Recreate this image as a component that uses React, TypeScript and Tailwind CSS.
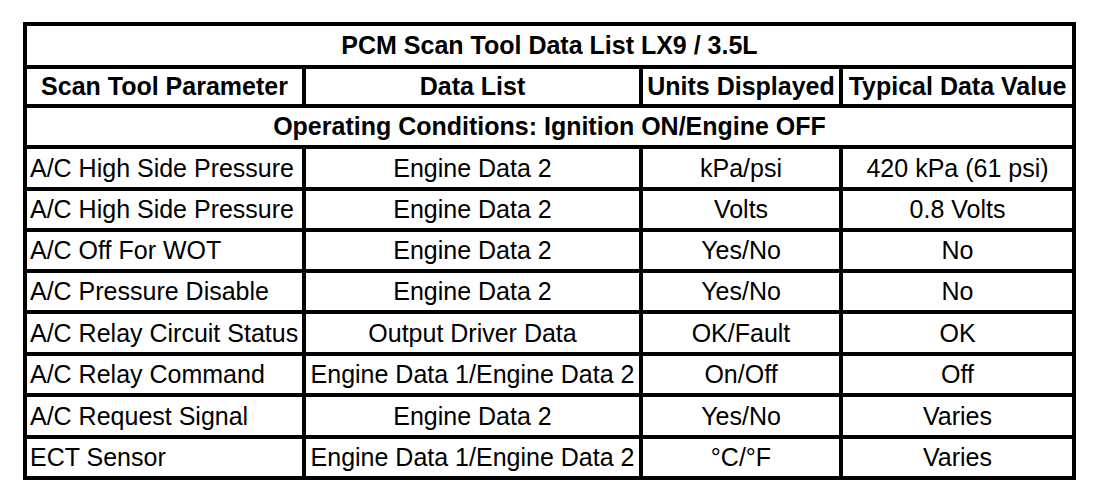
import React from "react";

const rows: [string, string, string, string][] = [
  ["A/C High Side Pressure", "Engine Data 2", "kPa/psi", "420 kPa (61 psi)"],
  ["A/C High Side Pressure", "Engine Data 2", "Volts", "0.8 Volts"],
  ["A/C Off For WOT", "Engine Data 2", "Yes/No", "No"],
  ["A/C Pressure Disable", "Engine Data 2", "Yes/No", "No"],
  ["A/C Relay Circuit Status", "Output Driver Data", "OK/Fault", "OK"],
  ["A/C Relay Command", "Engine Data 1/Engine Data 2", "On/Off", "Off"],
  ["A/C Request Signal", "Engine Data 2", "Yes/No", "Varies"],
  ["ECT Sensor", "Engine Data 1/Engine Data 2", "°C/°F", "Varies"],
];

export default function App() {
  return (
    <div
      className="w-[1120px] h-[498px] bg-white pt-[22px] pl-[23px] text-black"
      style={{ fontFamily: '"Liberation Sans", Arial, sans-serif' }}
    >
      <div className="grid w-[1053px] grid-cols-[275px_333px_196px_229px] grid-rows-[39px_35px_37px_38px_37px_37px_37px_38px_37px_38px_37px] gap-[4px] bg-black p-[4px] text-[25px] leading-none">
        <div className="col-span-4 flex items-center justify-center bg-white font-bold">
          PCM Scan Tool Data List LX9 / 3.5L
        </div>
        <div className="flex items-center justify-center bg-white font-bold">Scan Tool Parameter</div>
        <div className="flex items-center justify-center bg-white font-bold">Data List</div>
        <div className="flex items-center justify-center bg-white font-bold whitespace-nowrap">Units Displayed</div>
        <div className="flex items-center justify-center bg-white font-bold whitespace-nowrap">Typical Data Value</div>
        <div className="col-span-4 flex items-center justify-center bg-white font-bold">
          Operating Conditions: Ignition ON/Engine OFF
        </div>
        {rows.map((r, i) => (
          <React.Fragment key={i}>
            <div className="flex items-center bg-white pl-[3px] whitespace-nowrap">{r[0]}</div>
            <div className="flex items-center justify-center bg-white whitespace-nowrap">{r[1]}</div>
            <div className="flex items-center justify-center bg-white whitespace-nowrap">{r[2]}</div>
            <div className="flex items-center justify-center bg-white whitespace-nowrap">{r[3]}</div>
          </React.Fragment>
        ))}
      </div>
    </div>
  );
}
